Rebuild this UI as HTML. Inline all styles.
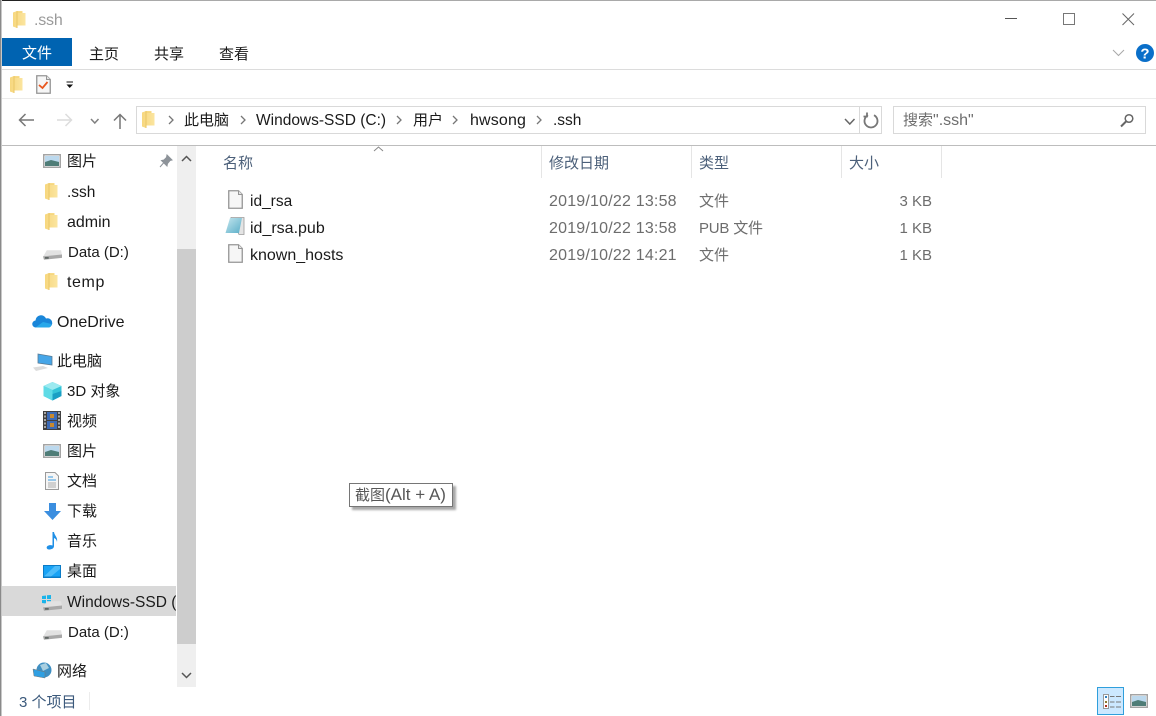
<!DOCTYPE html>
<html><head><meta charset="utf-8"><style>
html,body{margin:0;padding:0;background:#fff;width:1156px;height:716px;overflow:hidden}
body{position:relative;font-family:"Liberation Sans","Noto Sans CJK SC",sans-serif;font-size:15px;color:#1a1a1a}
.t{position:absolute;white-space:nowrap;line-height:20px;height:20px}
.b{position:absolute}
.g{color:#6d6d6d}
svg{position:absolute;overflow:visible}
</style></head><body>
<svg width="0" height="0" style="position:absolute"><defs>
<linearGradient id="fg" x1="0" x2="1" y1="0" y2="0"><stop offset="0" stop-color="#f7d77e"/><stop offset="1" stop-color="#fbe5a0"/></linearGradient>
<linearGradient id="ng" x1="0" x2="1" y1="0" y2="1"><stop offset="0" stop-color="#c4e6ee"/><stop offset="1" stop-color="#5aaec8"/></linearGradient>
<symbol id="folder" viewBox="0 0 13 17"><path d="M0 1.500L4 0H9.500V2H12.500V14.500H4V17L0 15.500Z" fill="url(#fg)"/><path d="M4 0V17" stroke="#e9c566" stroke-width="1"/><path d="M4.500 .5H9.500V2H4.500Z" fill="#f6d780"/></symbol>
<symbol id="drive" viewBox="0 0 20 10"><path d="M4 0H19L20 5.500L0 7Z" fill="#e2e2e2"/><path d="M0 6.500L20 4.500V8L1 10Z" fill="#a8a8a8"/><path d="M2 7.500H6V8.700H2Z" fill="#34403c"/></symbol>
<symbol id="pic" viewBox="0 0 18 14"><rect x=".75" y=".75" width="16.500" height="12.500" fill="#fff" stroke="#a4a4a4" stroke-width="1.500"/><rect x="2" y="2" width="14" height="10" fill="#bcd9ee"/><path d="M2 8L8 6L16 8V12H2Z" fill="#4f7d77"/></symbol>
<symbol id="doc" viewBox="0 0 15 19"><path d="M.75.750H10.500L14.250 4.500V18.250H.75Z" fill="#f6f6f6" stroke="#959595" stroke-width="1.300"/><path d="M10.500.75V4.500H14.250" fill="#e4e4e4" stroke="#959595"/></symbol>
</defs></svg>

<!-- window frame -->
<div class="b" style="left:0;top:0;width:1156px;height:1px;background:#a9a9a9"></div>
<div class="b" style="left:0;top:0;width:80px;height:1px;background:#222"></div>
<div class="b" style="left:0;top:0;width:1px;height:716px;background:#8a8a8a"></div>
<div class="b" style="left:1px;top:0;width:1px;height:716px;background:#c8c8c8"></div>

<!-- title bar -->
<svg style="left:13px;top:11px" width="13" height="17"><use href="#folder"/></svg>
<div class="t" style="left:34px;top:11px;color:#9a9a9a;font-size:16px;letter-spacing:-.2px">.ssh</div>
<svg style="left:1005px;top:12px" width="16" height="14"><path d="M0 6.500H12" stroke="#555" fill="none"/></svg>
<svg style="left:1063px;top:13px" width="13" height="13"><rect x=".5" y=".5" width="11" height="11" stroke="#777" fill="none"/></svg>
<svg style="left:1122px;top:13px" width="13" height="13"><path d="M.5.500L12 12M12 .5L.5 12" stroke="#666" fill="none"/></svg>

<!-- ribbon tabs -->
<div class="b" style="left:2px;top:38px;width:70px;height:28px;background:#0063b1"></div>
<div class="t" style="left:22px;top:44px;color:#fff;font-size:15px">文件</div>
<div class="t" style="left:89px;top:45px;font-size:15px">主页</div>
<div class="t" style="left:154px;top:45px;font-size:15px">共享</div>
<div class="t" style="left:219px;top:45px;font-size:15px">查看</div>
<svg style="left:1112px;top:49px" width="14" height="9"><path d="M1 1L6.500 6.500L12 1" stroke="#a8a8a8" fill="none"/></svg>
<svg style="left:1136px;top:44px" width="18" height="18"><circle cx="9" cy="9" r="9" fill="#0a6fc9"/><text x="9" y="14.500" font-family="Liberation Sans" font-size="15" font-weight="bold" fill="#fff" text-anchor="middle">?</text></svg>
<div class="b" style="left:2px;top:69px;width:1154px;height:1px;background:#dcdcdc"></div>

<!-- QAT -->
<svg style="left:10px;top:76px" width="13" height="17"><use href="#folder"/></svg>
<svg style="left:36px;top:75px" width="15" height="19"><use href="#doc"/><path d="M3 10L6.500 13L11.500 7" stroke="#e8571f" stroke-width="1.800" fill="none"/></svg>
<svg style="left:66px;top:81px" width="8" height="8"><path d="M.5 1H7" stroke="#111"/><path d="M.5 3.500H7L3.700 7Z" fill="#111"/></svg>
<div class="b" style="left:2px;top:98px;width:1154px;height:1px;background:#ebebeb"></div>

<!-- nav -->
<svg style="left:18px;top:113px" width="16" height="14"><path d="M16 7H1.500M7.500 1L1.500 7L7.500 13" stroke="#777" stroke-width="1.500" fill="none"/></svg>
<svg style="left:57px;top:113px" width="16" height="14"><path d="M0 7H14.500M8.500 1L14.500 7L8.500 13" stroke="#dcdcdc" stroke-width="1.500" fill="none"/></svg>
<svg style="left:90px;top:118px" width="10" height="7"><path d="M1 1L4.800 5L8.500 1" stroke="#808080" stroke-width="1.500" fill="none"/></svg>
<svg style="left:113px;top:113px" width="14" height="16"><path d="M7 16V1.500M1 7.500L7 1.500L13 7.500" stroke="#777" stroke-width="1.500" fill="none"/></svg>

<!-- address bar -->
<div class="b" style="left:136px;top:106px;width:744px;height:26px;border:1px solid #d9d9d9;box-sizing:content-box"></div>
<div class="b" style="left:859px;top:107px;width:1px;height:26px;background:#d9d9d9"></div>
<svg style="left:142px;top:111px" width="13" height="17"><use href="#folder"/></svg>
<svg style="left:168px;top:115px" width="7" height="10"><path d="M1 1L5 5L1 9" stroke="#777" stroke-width="1.300" fill="none"/></svg>
<div class="t" style="left:184px;top:111px">此电脑</div>
<svg style="left:240px;top:115px" width="7" height="10"><path d="M1 1L5 5L1 9" stroke="#777" stroke-width="1.300" fill="none"/></svg>
<div class="t" style="left:256px;top:111px;font-size:15.500px">Windows-SSD (C:)</div>
<svg style="left:396px;top:115px" width="7" height="10"><path d="M1 1L5 5L1 9" stroke="#777" stroke-width="1.300" fill="none"/></svg>
<div class="t" style="left:413px;top:111px">用户</div>
<svg style="left:452px;top:115px" width="7" height="10"><path d="M1 1L5 5L1 9" stroke="#777" stroke-width="1.300" fill="none"/></svg>
<div class="t" style="left:470px;top:111px;font-size:16px;letter-spacing:.15px">hwsong</div>
<svg style="left:536px;top:115px" width="7" height="10"><path d="M1 1L5 5L1 9" stroke="#777" stroke-width="1.300" fill="none"/></svg>
<div class="t" style="left:553px;top:111px;font-size:15.500px">.ssh</div>
<svg style="left:844px;top:118px" width="12" height="8"><path d="M1 1L5.800 6L10.500 1" stroke="#666" stroke-width="1.500" fill="none"/></svg>
<svg style="left:863px;top:112px" width="16" height="17"><path d="M5 3.200A6.500 6.500 0 1 0 11 3.200M4 .5V4.500H.5" stroke="#777" stroke-width="1.800" fill="none"/></svg>

<!-- search -->
<div class="b" style="left:893px;top:106px;width:251px;height:26px;border:1px solid #d9d9d9"></div>
<div class="t g" style="left:903px;top:111px">搜索<span style="font-size:16px">".ssh"</span></div>
<svg style="left:1120px;top:113px" width="15" height="15"><circle cx="9" cy="5.500" r="3.800" stroke="#666" stroke-width="1.500" fill="none"/><path d="M6 8.500L1 13.500" stroke="#666" stroke-width="2"/></svg>

<div class="b" style="left:2px;top:145px;width:1154px;height:1px;background:#bdbdbd"></div>

<!-- nav pane -->
<svg style="left:43px;top:154px" width="18" height="14"><use href="#pic"/></svg>
<div class="t" style="left:67px;top:152px">图片</div>
<svg style="left:159px;top:154px" width="14" height="14"><path d="M8 1L13 6L11 6.500L8.500 9.500L8 12L2.500 6.500L5 6L7.500 3.500Z M4.500 9L1 13" fill="#8d9399" stroke="#8d9399"/></svg>
<svg style="left:45px;top:183px" width="13" height="17"><use href="#folder"/></svg>
<div class="t" style="left:67px;top:183px;font-size:15.500px">.ssh</div>
<svg style="left:45px;top:213px" width="13" height="17"><use href="#folder"/></svg>
<div class="t" style="left:67px;top:213px;font-size:16px">admin</div>
<svg style="left:43px;top:250px" width="19" height="10"><use href="#drive"/></svg>
<div class="t" style="left:68px;top:243px">Data (D:)</div>
<svg style="left:45px;top:273px" width="13" height="17"><use href="#folder"/></svg>
<div class="t" style="left:67px;top:273px;font-size:16px;letter-spacing:.6px">temp</div>

<svg style="left:32px;top:314px" width="20" height="14"><path d="M4 13.500A3.500 3.500 0 0 1 3.500 6.500A5.500 5.500 0 0 1 14 4.500A4.500 4.500 0 0 1 17 13.500Z" fill="#1a86d9"/><path d="M3.500 13.500L11 8L19.500 10A3.500 3.500 0 0 1 17 13.500Z" fill="#28a8ea"/></svg>
<div class="t" style="left:57px;top:313px;font-size:16px">OneDrive</div>

<svg style="left:32px;top:353px" width="21" height="18"><path d="M6 1L20 3.500V12L6 10Z" fill="#46a6e8" stroke="#5a7c95" stroke-width=".8"/><path d="M1 14.500L11 13L16 15L4 18Z" fill="#dcdcdc"/></svg>
<div class="t" style="left:57px;top:352px">此电脑</div>

<svg style="left:43px;top:382px" width="19" height="19"><path d="M9.500 0L18.500 4V14L9.500 18.500L.5 14V4Z" fill="#35c4d8"/><path d="M.5 4L9.500 8L18.500 4L9.500 0Z" fill="#9ceaf0"/><path d="M9.500 8V18.500L.5 14V4Z" fill="#5fdbe6"/><path d="M9.500 12L18.500 9V14L9.500 18.500Z" fill="#1a9fc4"/></svg>
<div class="t" style="left:67px;top:382px">3D 对象</div>

<svg style="left:43px;top:411px" width="18" height="19"><rect width="18" height="19" fill="#404040"/><rect x="4" y="1" width="10" height="8" fill="#3d6bb5"/><rect x="4" y="10" width="10" height="8" fill="#3d6bb5"/><rect x="7" y="3" width="4" height="4" fill="#c8892f"/><rect x="7" y="12" width="4" height="4" fill="#c8892f"/><path d="M2 1V18M16 1V18" stroke="#ccc" stroke-dasharray="2 1.500" stroke-width="1.500"/></svg>
<div class="t" style="left:67px;top:412px">视频</div>

<svg style="left:43px;top:444px" width="18" height="14"><use href="#pic"/></svg>
<div class="t" style="left:67px;top:442px">图片</div>

<svg style="left:45px;top:472px" width="14" height="18"><path d="M.5.500H10L13.500 4V17.500H.5Z" fill="#f5f5f5" stroke="#9a9a9a"/><path d="M3 5H8M3 8H11" stroke="#3a9be0"/><path d="M3 11H11M3 13H11M3 15H11" stroke="#aaa"/></svg>
<div class="t" style="left:67px;top:472px">文档</div>

<svg style="left:44px;top:503px" width="17" height="17"><path d="M5 0H12V8H17L8.500 17L0 8H5Z" fill="#3b8edf"/></svg>
<div class="t" style="left:67px;top:502px">下载</div>

<svg style="left:46px;top:532px" width="12" height="18"><path d="M6.500 0H8C8.500 4 12 5 11 10C10.500 7 9 6.500 8 6V14C8 16.500 5.500 17.500 3 17.500C.5 17.500 0 15 1.500 14C3 13 5 13 6.500 13.500Z" fill="#1f8fe6"/></svg>
<div class="t" style="left:67px;top:532px">音乐</div>

<svg style="left:43px;top:565px" width="18" height="14"><rect width="18" height="13" fill="#0b7bc6"/><rect x="1" y="1" width="16" height="10.500" fill="#19a3f5"/><path d="M1 11.500L12 1H17V4L8 11.500Z" fill="#4dbcfa"/></svg>
<div class="t" style="left:67px;top:562px">桌面</div>

<div class="b" style="left:2px;top:586px;width:174px;height:30px;background:#d9d9d9"></div>
<svg style="left:42px;top:595px" width="9" height="9"><path d="M0 1L4 .5V4H0ZM5 .3L9 0V4H5ZM0 5H4V8.500L0 8ZM5 5H9V9L5 8.600Z" fill="#19b4ea"/></svg>
<svg style="left:43px;top:601px" width="19" height="10"><use href="#drive"/></svg>
<div class="t" style="left:67px;top:593px;width:109px;overflow:hidden;font-size:15.500px">Windows-SSD (C:)</div>

<svg style="left:43px;top:630px" width="19" height="10"><use href="#drive"/></svg>
<div class="t" style="left:68px;top:623px">Data (D:)</div>

<svg style="left:32px;top:662px" width="20" height="18"><circle cx="12" cy="8" r="7.500" fill="#3f8fc2"/><path d="M8 3L14 1L17 6L11 9Z" fill="#a9cfe0"/><path d="M1 7L13 10V16L2 14Z" fill="#2f9fe2" stroke="#777" stroke-width=".5"/></svg>
<div class="t" style="left:57px;top:662px">网络</div>

<!-- scrollbar -->
<div class="b" style="left:177px;top:146px;width:19px;height:541px;background:#efefef"></div>
<div class="b" style="left:177px;top:249px;width:19px;height:395px;background:#cdcdcd"></div>
<svg style="left:181px;top:155px" width="11" height="7"><path d="M1 6L5.500 1.500L10 6" stroke="#555" stroke-width="1.500" fill="none"/></svg>
<svg style="left:181px;top:672px" width="11" height="7"><path d="M1 1L5.500 5.500L10 1" stroke="#555" stroke-width="1.500" fill="none"/></svg>

<!-- header -->
<div class="b" style="left:541px;top:146px;width:1px;height:32px;background:#e5e5e5"></div>
<div class="b" style="left:691px;top:146px;width:1px;height:32px;background:#e5e5e5"></div>
<div class="b" style="left:841px;top:146px;width:1px;height:32px;background:#e5e5e5"></div>
<div class="b" style="left:941px;top:146px;width:1px;height:32px;background:#e5e5e5"></div>
<svg style="left:373px;top:146px" width="12" height="6"><path d="M1 5L5.500 1L10 5" stroke="#888" fill="none"/></svg>
<div class="t" style="left:223px;top:154px;color:#4c607a;font-size:15px">名称</div>
<div class="t" style="left:549px;top:154px;color:#4c607a;font-size:15px">修改日期</div>
<div class="t" style="left:699px;top:154px;color:#4c607a;font-size:15px">类型</div>
<div class="t" style="left:849px;top:154px;color:#4c607a;font-size:15px">大小</div>

<!-- files -->
<svg style="left:228px;top:190px" width="15" height="19"><use href="#doc"/></svg>
<div class="t" style="left:250px;top:192px;font-size:15.500px">id_rsa</div>
<div class="t g" style="left:549px;top:192px;font-size:16px;letter-spacing:.2px">2019/10/22 13:58</div>
<div class="t g" style="left:699px;top:192px">文件</div>
<div class="t g" style="left:832px;top:192px;width:100px;text-align:right">3 KB</div>

<svg style="left:225px;top:217px" width="20" height="19"><path d="M6 .5H19V17.500H14Z" fill="#e4e4e4" stroke="#9a9a9a" stroke-width=".8"/><path d="M5 1H17L14 16H.5Z" fill="url(#ng)"/></svg>
<div class="t" style="left:250px;top:219px;font-size:16px">id_rsa.pub</div>
<div class="t g" style="left:549px;top:219px;font-size:16px;letter-spacing:.2px">2019/10/22 13:58</div>
<div class="t g" style="left:699px;top:219px;letter-spacing:-.2px">PUB 文件</div>
<div class="t g" style="left:832px;top:219px;width:100px;text-align:right">1 KB</div>

<svg style="left:228px;top:244px" width="15" height="19"><use href="#doc"/></svg>
<div class="t" style="left:250px;top:246px;font-size:16px">known_hosts</div>
<div class="t g" style="left:549px;top:246px;font-size:16px;letter-spacing:.2px">2019/10/22 14:21</div>
<div class="t g" style="left:699px;top:246px">文件</div>
<div class="t g" style="left:832px;top:246px;width:100px;text-align:right">1 KB</div>

<!-- tooltip -->
<div class="b" style="left:349px;top:483px;width:102px;height:22px;background:#fff;border:1px solid #767676;box-shadow:3px 3px 2px #a8a8a8"></div>
<div class="t" style="left:355px;top:485px;color:#575757;font-size:15px">截图<span style="font-size:17px">(Alt + A)</span></div>

<!-- status -->
<div class="t" style="left:19px;top:693px;color:#3c5a7c;font-size:15px">3 个项目</div>
<div class="b" style="left:89px;top:692px;width:1px;height:18px;background:#ececec"></div>
<div class="b" style="left:1097px;top:687px;width:25px;height:26px;background:#cce8ff;border:1px solid #2f9fdc;box-sizing:content-box"></div>
<svg style="left:1103px;top:694px" width="18" height="16"><rect x=".5" y=".5" width="5" height="14" fill="#fff" stroke="#999"/><rect x="2" y="2" width="2" height="2" fill="#2f7fbf"/><rect x="2" y="7" width="2" height="2" fill="#8a7a30"/><rect x="2" y="11" width="2" height="2" fill="#b03020"/><path d="M7 2.500H11.500M13 2.500H18M7 8H11.500M13 8H18M7 13H11.500M13 13H18" stroke="#777"/></svg>
<svg style="left:1130px;top:694px" width="18" height="14"><use href="#pic"/></svg>
</body></html>
